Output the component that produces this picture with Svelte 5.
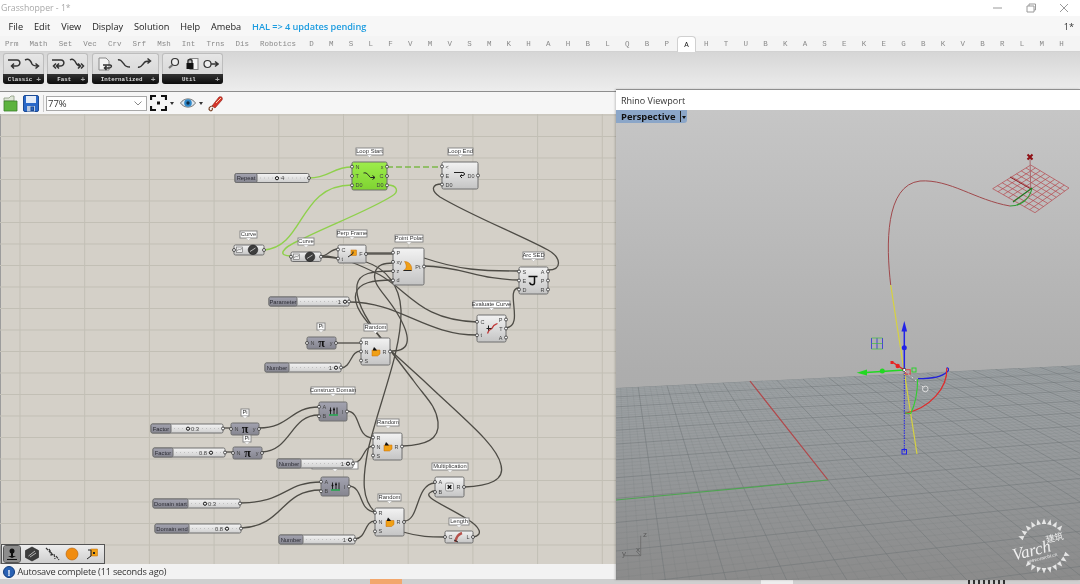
<script>
  const menus = ['File','Edit','View','Display','Solution','Help','Ameba'];
  const wide = ['Prm','Math','Set','Vec','Crv','Srf','Msh','Int','Trns','Dis','Robotics'];
  const narrow = 'D M S L F V M V S M K H A H B L Q B P A H T U B K A S E K E G B K V B R L M H'.split(' ');
  const activeTab = 19;

  const ribbon = [
    { name:'Classic', w:41, icons:['loop','wiggle'] },
    { name:'Fast', w:41, icons:['loop2','wiggle2'] },
    { name:'Internalized', w:67, icons:['doc','wiggle3','wiggle4'] },
    { name:'Util', w:61, icons:['lens','lock','timer'] }
  ];
  const ribbonPaths = {
    loop:'M1 3 H10 C14 3 14 9 9 9 H5 M7 6.5 L4.5 9 L7 11.5',
    wiggle:'M1 3 C5 1 7 4 8 7 C9 9 11 9 14 9 M11.5 6.5 L14.5 9 L11.5 11.5',
    loop2:'M1 3 H10 C14 3 14 9 9 9 H6 M8 6.5 L5.5 9 L8 11.5 M5 6.5 L2.5 9 L5 11.5',
    wiggle2:'M1 3 C4 1 6 4 7 6 C8 8 9 9 11 9 M9 6.5 L11.5 9 L9 11.5 M12 6.5 L14.5 9 L12 11.5',
    wiggle3:'M1 3 C4 2 5 5 7 7 C8 9 10 10 13 10',
    wiggle4:'M1 10 C4 11 5 8 7 6 C8 4 10 4 13 4 M10.5 1.5 L13.5 4 L10.5 6.5',
    timer:'M8 7 H14.5 M12 4.5 L15 7 L12 9.5'
  };

  /* canvas */
  const vLines = Array.from({length:10},(_,i)=>20+i*64.7);
  const hLines = Array.from({length:21},(_,i)=>115+i*21.5);

  const nodes = [
    {x:352,y:162,w:35,h:28,k:'green',tag:'Loop Start',tx:356,tw:27,ty:148,i:['N','T','D0'],o:['x','C','D0'],ic:'loop'},
    {x:442,y:162,w:36,h:27,k:'light',tag:'Loop End',tx:448,tw:25,ty:148,i:['<','E','D0'],o:['D0'],ic:'loopend'},
    {x:338,y:245,w:28,h:18,k:'light',tag:'Perp Frame',tx:337,tw:30,ty:230,i:['C','t'],o:['F'],ic:'perp'},
    {x:393,y:248,w:31,h:37,k:'light',tag:'Point Polar',tx:395,tw:28,ty:235,i:['P','xy','z','d'],o:['Pt'],ic:'polar'},
    {x:519,y:267,w:29,h:27,k:'light',tag:'Arc SED',tx:523,tw:21,ty:252,i:['S','E','D'],o:['A','P','R'],ic:'arc'},
    {x:477,y:315,w:29,h:27,k:'light',tag:'Evaluate Curve',tx:473,tw:37,ty:301,i:['C','t'],o:['P','T','A'],ic:'eval'},
    {x:361,y:338,w:29,h:27,k:'light',tag:'Random',tx:364,tw:23,ty:324,i:['R','N','S'],o:['R'],ic:'random'},
    {x:307,y:337,w:29,h:12,k:'dark',tag:'Pi',tx:317,tw:8,ty:323,i:['N'],o:['y'],ic:'pi'},
    {x:319,y:402,w:28,h:19,k:'dark',tag:'Construct Domain',tx:311,tw:44,ty:387,i:['A','B'],o:['I'],ic:'domain'},
    {x:231,y:423,w:28,h:12,k:'dark',tag:'Pi',tx:241,tw:8,ty:409,i:['N'],o:['y'],ic:'pi'},
    {x:373,y:433,w:29,h:27,k:'light',tag:'Random',tx:377,tw:22,ty:419,i:['R','N','S'],o:['R'],ic:'random'},
    {x:321,y:477,w:28,h:19,k:'dark',tag:'',tx:312,tw:46,ty:462,i:['A','B'],o:['I'],ic:'domain'},
    {x:233,y:447,w:29,h:12,k:'dark',tag:'Pi',tx:243,tw:8,ty:435,i:['N'],o:['y'],ic:'pi'},
    {x:375,y:508,w:29,h:28,k:'light',tag:'Random',tx:378,tw:23,ty:494,i:['R','N','S'],o:['R'],ic:'random'},
    {x:435,y:477,w:29,h:20,k:'light',tag:'Multiplication',tx:432,tw:36,ty:463,i:['A','B'],o:['R'],ic:'mult'},
    {x:445,y:531,w:28,h:12,k:'light',tag:'Length',tx:449,tw:20,ty:518,i:['C'],o:['L'],ic:'length'}
  ];
  const ports = (n, list) => list.map((l,j)=>({l, y:n.y+n.h*(j+.5)/list.length}));

  const sliders = [
    {x:235,y:173.5,w:74,lw:22,n:'Repeat',v:'4',kx:277,vx:281,a:'start'},
    {x:269,y:297,w:80,lw:28,n:'Parameter',v:'1',kx:345,vx:341,a:'end'},
    {x:265,y:363,w:76,lw:24,n:'Number',v:'1',kx:336,vx:332,a:'end'},
    {x:151,y:424,w:72,lw:20,n:'Factor',v:'0.3',kx:188,vx:191,a:'start'},
    {x:153,y:448,w:72,lw:20,n:'Factor',v:'0.8',kx:211,vx:207,a:'end'},
    {x:277,y:459,w:76,lw:24,n:'Number',v:'1',kx:348,vx:344,a:'end'},
    {x:153,y:499,w:87,lw:35,n:'Domain start',v:'0.3',kx:205,vx:208,a:'start'},
    {x:155,y:524,w:86,lw:34,n:'Domain end',v:'0.8',kx:227,vx:223,a:'end'},
    {x:279,y:535,w:76,lw:24,n:'Number',v:'1',kx:350,vx:346,a:'end'}
  ];
  const curves = [
    {x:234,y:245,w:30,h:10,tag:'Curve',tx:240,tw:17,ty:231},
    {x:291,y:252,w:30,h:9.5,tag:'Curve',tx:298,tw:16,ty:238}
  ];

  const greenWires = [
    'M309 178 C330 178 332 167 352 167',
    'M264 250 C305 247 298 185 352 185',
    'M387 185 C398 185 399 192 392 196 C370 210 330 225 300 240 C280 249 278 256 291 256'
  ];
  const wires = [
    'M321 256 C328 256 330 249 338 249','M321 257 C328 257 330 258 338 258',
    'M366 253 H393','M366 254 H393',
    'M321 256 C340 256 360 265 380 275 C410 292 420 320 477 322',
    'M349 302 C400 302 425 335 477 335',
    'M424 258 C460 270 480 271 519 271','M424 266 C460 266 480 280 519 280',
    'M506 328 C525 326 504 288 519 288',
    'M548 270 C562 270 562 258 548 250 C520 235 470 215 440 197 C430 190 432 184 442 184',
    'M392 351 C412 351 411 336 397 313 C385 293 372 285 375 273 C377 264 385 263 393 263',
    'M403 446 C425 445 440 440 438 422 C436 405 425 397 413 380 L380 337 C365 318 355 300 357 285 C359 273 372 271 393 271',
    'M464 487 C490 486 505 480 501 465 C497 445 465 420 423 380 L390 350 L380 337 C365 320 352 305 356 293 C359 283 372 280 393 280',
    'M366 262 C385 268 400 285 401 310 C402 350 380 400 368 450 C362 480 362 500 375 512',
    'M336 343 H361','M341 368 C352 367 350 351 361 351',
    'M223 428 H231','M259 428 C290 428 290 407 319 407',
    'M225 452 H233','M262 452 C292 450 290 415 319 415',
    'M347 411 C362 412 355 437 373 438','M353 463 C365 462 362 447 373 446',
    'M240 503 C285 503 285 482 321 482','M241 528 C285 526 280 490 321 490',
    'M349 486 C364 487 358 511 375 512','M355 539 C367 538 364 521 375 521',
    'M404 521 C420 521 415 484 435 483','M403 532 C420 537 430 537 445 537',
    'M473 537 C484 535 480 527 467 519 C445 505 421 497 431 492 C432 491 434 491 435 491'
  ];

  const dockIcons = [0,1,2,3,4];

  /* viewport perspective ground */
  const O=[828,480], VU=[613,208], VV=[3563,243], a=.0711, b=.015;
  function proj(u,v){
    const t=u*a, s=v*b, d=1+t+s;
    return [(O[0]+t*VU[0]+s*VV[0])/d,(O[1]+t*VU[1]+s*VV[1])/d];
  }
  function lineStr(p,q){ return `M${p[0].toFixed(1)} ${p[1].toFixed(1)}L${q[0].toFixed(1)} ${q[1].toFixed(1)}`; }
  let minorD='', majorD='';
  const UMIN=-6, UMAX=8, VMIN=-30, VMAX=30;
  for(let i=UMIN*5;i<=UMAX*5;i++){
    const s=lineStr(proj(i/5,VMIN),proj(i/5,VMAX));
    if(i%5===0) majorD+=s; else minorD+=s;
  }
  for(let i=VMIN*5;i<=VMAX*5;i++){
    const s=lineStr(proj(UMIN,i/5),proj(UMAX,i/5));
    if(i%5===0) majorD+=s; else minorD+=s;
  }
  const farEdge = (()=>{ const p=proj(8,-30), q=proj(8,30); return `${p[0]},${p[1]} ${q[0]},${q[1]} 1400,900 -400,900`; })();

  /* red cplane diamond */
  const T=[1030.7,165],R=[1069,188],B=[1035,212.7],L=[992.7,188.7];
  const mix=(p,q,f)=>[p[0]+(q[0]-p[0])*f,p[1]+(q[1]-p[1])*f];
  let planeD='';
  for(let i=0;i<=8;i++){ const f=i/8;
    planeD+=lineStr(mix(T,R,f),mix(L,B,f));
    planeD+=lineStr(mix(T,L,f),mix(R,B,f));
  }
  /* watermark: rays around a ring, open on the left and right where the text runs */
  const rays=(()=>{ const c=[1044,546],n=26; let d='';
    for(let i=0;i<n;i++){
      const an=(i+.5)*2*Math.PI/n, sn=Math.abs(Math.sin(an-(-14*Math.PI/180)));
      if(sn<.45) continue;
      const w=Math.PI/n*.85, pt=(r,x)=>`${(c[0]+r*Math.cos(x)).toFixed(1)} ${(c[1]+r*Math.sin(x)).toFixed(1)}`;
      d+=`M${pt(22,an-w)}L${pt(27.5,an)}L${pt(22,an+w)}Z`;
    }
    return d; })();
</script>

<div class="app">
  <header class="title">Grasshopper - 1*
    <div class="win">
      <svg width="12" height="10" viewBox="0 0 12 10"><path d="M1 5H10" class="wc"/></svg>
      <svg width="12" height="10" viewBox="0 0 12 10"><path d="M2 3H9V9H2ZM4 3V1H10.500V7H9" class="wc"/></svg>
      <svg width="12" height="10" viewBox="0 0 12 10"><path d="M2 1L10 9M10 1L2 9" class="wc"/></svg>
    </div>
  </header>

  <nav class="menu">
    {#each menus as m}<span>{m}</span>{/each}
    <span class="hal">HAL =&gt; 4 updates pending</span>
    <span class="star">1*</span>
  </nav>

  <div class="tabs">
    {#each wide as t}<span class="wt">{t}</span>{/each}
    {#each narrow as t, i}<span class="nt" class:on={i===activeTab}>{t}</span>{/each}
  </div>

  <div class="ribbon">
    {#each ribbon as g}
      <div class="group" style="width:{g.w}px">
        <div class="gicons">
          {#each g.icons as ic}
            <svg width="16" height="14" viewBox="0 0 16 14">
              {#if ic==='doc'}
                <path d="M2 1H9L12 4V13H2Z" class="docf"/>
                <path d="M6 8H13C15 8 15 11 12 11H8M9.500 9L7.500 11L9.500 13" class="ri"/>
              {:else if ic==='lens'}
                <circle cx="9" cy="5" r="3.500" class="lens"/><path d="M6.500 8L3 11" class="rt"/>
              {:else if ic==='lock'}
                <rect x="6" y="1.500" width="8" height="11" class="docf"/>
                <rect x="2.500" y="6" width="7" height="6" class="blk"/><path d="M4 6V4C4 2 8 2 8 4V6" class="ri"/>
              {:else if ic==='timer'}
                <circle cx="4.500" cy="7" r="3.500" class="lens"/><path d={ribbonPaths.timer} class="ri"/>
              {:else}
                <path d={ribbonPaths[ic]} class="ri"/>
              {/if}
            </svg>
          {/each}
        </div>
        <div class="cap"><span>{g.name}</span><b>+</b></div>
      </div>
    {/each}
  </div>

  <div class="toolbar">
    <svg class="ti" width="15" height="17" viewBox="0 0 15 17">
      <path d="M1 3H6L8 1H11V6H1Z" class="fback"/>
      <path d="M1 6H14V16H1Z" class="ffront"/>
    </svg>
    <svg class="ti save" width="16" height="17" viewBox="0 0 16 17">
      <rect x=".5" y=".5" width="15" height="16" rx="1.500" class="sbody"/>
      <rect x="3" y="1" width="10" height="7" class="slabel"/>
      <rect x="4" y="11" width="8" height="5.500" class="sgate"/>
      <rect x="8" y="12" width="2.500" height="3.500" class="sbody"/>
    </svg>
    <i class="sep"></i>
    <div class="combo"><span>77%</span>
      <svg width="8" height="5" viewBox="0 0 8 5"><path d="M.5 .5L4 4L7.500 .5" class="chev"/></svg>
    </div>
    <svg class="fit" width="17" height="16" viewBox="0 0 17 16">
      <path d="M1 5V1H6M11 1H16V5M16 11V15H11M6 15H1V11" class="fitp"/><rect x="7" y="6.500" width="3" height="3" class="blk"/>
    </svg>
    <i class="tri"></i>
    <svg class="eye" width="16" height="12" viewBox="0 0 16 12">
      <path d="M.5 6C4 .5 12 .5 15.500 6C12 11.500 4 11.500 .5 6Z" class="eyew"/>
      <circle cx="8" cy="6" r="3.800" class="eyeb"/><circle cx="8" cy="6" r="1.700" class="eyed"/>
    </svg>
    <i class="tri"></i>
    <svg class="pen" width="17" height="17" viewBox="0 0 17 17">
      <path d="M5 11L12 2C15 1 16 3 15 5L8 13Z" class="penr"/>
      <path d="M9 8L14 3" class="pent"/>
      <path d="M6 11C2 11 1 14 3 15.500C5 16.500 6 14 5 13" class="penw"/>
    </svg>
  </div>

  <main class="canvas">
    <svg class="cv" width="616" height="450" viewBox="0 114 616 450">
      <defs>
        <linearGradient id="gl" x1="0" y1="0" x2="0" y2="1"><stop offset="0" stop-color="#f3f3f3"/><stop offset="1" stop-color="#c4c4c4"/></linearGradient>
        <linearGradient id="gd" x1="0" y1="0" x2="0" y2="1"><stop offset="0" stop-color="#a3a3b0"/><stop offset="1" stop-color="#85858f"/></linearGradient>
        <linearGradient id="gg" x1="0" y1="0" x2="0" y2="1"><stop offset="0" stop-color="#9ded4c"/><stop offset="1" stop-color="#7fd331"/></linearGradient>
        <linearGradient id="gs" x1="0" y1="0" x2="0" y2="1"><stop offset="0" stop-color="#f4f4f4"/><stop offset="1" stop-color="#cfcfcf"/></linearGradient>
      </defs>
      {#each vLines as x}<line x1={x} x2={x} y1="114" y2="564" class="grid"/>{/each}
      {#each hLines as y}<line x1="0" x2="616" y1={y} y2={y} class="grid"/>{/each}

      {#each wires as d}<path {d} class="wire"/>{/each}
      {#each greenWires as d}<path {d} class="wire green"/>{/each}
      <path d="M387 167 H442" class="wire dash"/>

      {#each nodes as n}
        <rect x={n.tx} y={n.ty} width={n.tw} height="7" class="tag"/>
        <path d="M{n.tx+n.tw/2-2.500} {n.ty+7}L{n.tx+n.tw/2} {n.ty+9.500}L{n.tx+n.tw/2+2.500} {n.ty+7}Z" class="tagt"/>
        {#if n.tag}<text x={n.tx+n.tw/2} y={n.ty+5.300} class="tagx">{n.tag}</text>{/if}
        <rect x={n.x} y={n.y} width={n.w} height={n.h} rx="1.500" class="body {n.k}"/>
        {#each ports(n,n.i) as p}
          <circle cx={n.x} cy={p.y} r="1.500" class="port"/>
          <text x={n.x+3.500} y={p.y+2} class="pl">{p.l}</text>
        {/each}
        {#each ports(n,n.o) as p}
          <circle cx={n.x+n.w} cy={p.y} r="1.500" class="port"/>
          <text x={n.x+n.w-3.500} y={p.y+2} class="pl end">{p.l}</text>
        {/each}
        {@const cx=n.x+n.w/2}
        {@const cy=n.y+n.h/2}
        <g transform="translate({cx-(n.ic==='polar'?1:0)} {cy})">
          {#if n.ic==='loop'}
            <path d="M-6 -3C-2 -4 -1 0 1 1.500H5M3 -.5L5.500 1.500L3 3.500" class="ico"/>
          {:else if n.ic==='loopend'}
            <path d="M-6 -3H3C5 -3 5 0 3 0H1M2 -1L0 .5L2 2.500" class="ico"/>
          {:else if n.ic==='perp'}
            <rect x="-1" y="-4" width="5.500" height="5.500" class="org"/>
            <path d="M-4 3L1 -.5" class="ico"/><path d="M1 -2.500V-.5" class="ico"/>
          {:else if n.ic==='polar'}
            <path d="M-3 -5C3 -5 5 1 4 4H-4C0 2 -1 -2 -3 -5Z" class="org"/>
            <path d="M-4 4H4" class="ico"/>
          {:else if n.ic==='arc'}
            <path d="M-5 -4H4M1 -4V2C1 5 -3 5 -4 2" class="ico thick"/>
          {:else if n.ic==='eval'}
            <path d="M-4 5C-2 -1 0 2 1 -1C2 -4 4 -4 6 -5" class="redl"/>
            <path d="M-3 -3V2M-5 0H0" class="ico"/>
          {:else if n.ic==='random'}
            <path d="M-3.500 -1.500H4.500V2.500L2 4.500H-3.500Z" class="org"/><path d="M-2.500 -2L-1.500 -4.500L.5 -2.500L1.500 -1H-2.500Z" class="blk"/>
          {:else if n.ic==='pi'}
            <text x="0" y="4" class="pi">π</text>
          {:else if n.ic==='domain'}
            <path d="M-2.500 -4V3M1 -4V3M4 -4V3" class="ico"/>
            <circle cx="-2.500" cy="-1" r="1" class="blk"/><circle cx="1" cy="-2" r="1" class="blk"/>
            <path d="M-4 3.500H5" class="grn"/>
          {:else if n.ic==='mult'}
            <rect x="-4" y="-4" width="8" height="8" rx="1.500" class="mbox"/>
            <path d="M-1.800 -1.800L1.800 1.800M1.800 -1.800L-1.800 1.800" class="ico thick"/>
          {:else if n.ic==='length'}
            <path d="M-3.500 5C-3 0 0 -3 3 -4" class="lenr"/><path d="M-5 3L-1 5" class="ico"/>
          {/if}
        </g>
      {/each}

      {#each curves as c}
        <rect x={c.tx} y={c.ty} width={c.tw} height="7" class="tag"/>
        <path d="M{c.tx+c.tw/2-2.500} {c.ty+7}L{c.tx+c.tw/2} {c.ty+9.500}L{c.tx+c.tw/2+2.500} {c.ty+7}Z" class="tagt"/>
        <text x={c.tx+c.tw/2} y={c.ty+5.300} class="tagx">{c.tag}</text>
        <rect x={c.x} y={c.y} width={c.w} height={c.h} rx="1.500" class="body light"/>
        <rect x={c.x+2.500} y={c.y+2} width="6" height="5.500" class="cb"/>
        <path d="M{c.x+3.500} {c.y+6}C{c.x+5} {c.y+1} {c.x+6} {c.y+8} {c.x+7.500} {c.y+3}" class="ico thin"/>
        <circle cx={c.x+19} cy={c.y+4.800} r="4.800" class="hex"/>
        <path d="M{c.x+16} {c.y+6.500}L{c.x+21.500} {c.y+3}" class="hexl"/>
        <circle cx={c.x} cy={c.y+c.h/2} r="1.500" class="port"/>
        <circle cx={c.x+c.w} cy={c.y+c.h/2} r="1.500" class="port"/>
      {/each}

      {#each sliders as s}
        <rect x={s.x} y={s.y} width={s.w} height="9" rx="1.500" class="body slide"/>
        <rect x={s.x} y={s.y} width={s.lw} height="9" rx="1.500" class="body dark"/>
        <text x={s.x+s.lw/2} y={s.y+6.500} class="sn">{s.n}</text>
        <line x1={s.x+s.lw+3} x2={s.x+s.w-3} y1={s.y+4.500} y2={s.y+4.500} class="track"/>
        <circle cx={s.kx} cy={s.y+4.700} r="1.600" class="knob"/>
        <text x={s.vx} y={s.y+6.500} class="sv {s.a}">{s.v}</text>
        <circle cx={s.x+s.w} cy={s.y+4.500} r="1.500" class="port"/>
      {/each}
    </svg>

    <div class="dock">
      {#each dockIcons as d}
        <svg class="di" class:pressed={d===0} width="16" height="16" viewBox="0 0 16 16">
          {#if d===0}
            <circle cx="8" cy="5" r="2.500" class="blk"/><path d="M7 6H9V10H12L8 12L4 10H7ZM3 13H13V14H3Z" class="blk"/>
          {:else if d===1}
            <path d="M8 1L14.500 4.500V11.500L8 15L1.500 11.500V4.500Z" class="hex"/><path d="M4.500 10L11 5M6 11L12 7" class="hexl"/>
          {:else if d===2}
            <path d="M2 2L6 6L7 9L10 8L11 13M5 3L8 8M12 10L15 14" class="dockw"/>
          {:else if d===3}
            <circle cx="8" cy="8" r="6" class="orb"/>
          {:else}
            <rect x="7" y="3" width="6.500" height="7" class="org"/><path d="M3 13L7 10V4H4M9 6L11 8M11 6L9 8" class="ico"/>
          {/if}
        </svg>
      {/each}
    </div>
  </main>

  <footer class="status">
    <svg width="12" height="12" viewBox="0 0 12 12"><circle cx="6" cy="6" r="5.500" class="infoc"/><text x="6" y="9.500" class="infot">!</text></svg>
    <span>Autosave complete (11 seconds ago)</span>
  </footer>
  <div class="strip"><i class="orange"></i><i class="pale"></i><i class="frag"></i></div>

  <section class="viewport">
    <div class="vh">Rhino Viewport</div>
    <div class="vb">
      <svg class="vs" width="464" height="470" viewBox="616 110 464 470">
        <defs>
          <linearGradient id="gr" x1="0" y1="360" x2="0" y2="580" gradientUnits="userSpaceOnUse">
            <stop offset="0" stop-color="#a0a5a8"/><stop offset=".5" stop-color="#95989a"/><stop offset="1" stop-color="#8b8b8b"/>
          </linearGradient>
        </defs>
        <polygon points={farEdge} fill="url(#gr)"/>
        <clipPath id="gc"><polygon points={farEdge}/></clipPath>
        <g clip-path="url(#gc)">
          <path d={minorD} class="gmin"/>
          <path d={majorD} class="gmaj"/>
        </g>
        <path d="M750 381L828 480" class="axr"/>
        <path d="M616 500L828 480" class="axg"/>

        <g class="axes">
          <path d="M640.700 535.700V555.700H625M640.700 555.700L637 552"/>
          <text x="643" y="537">z</text><text x="622" y="556">y</text><text x="636" y="552">x</text>
        </g>

        <path d={planeD} class="plane"/>
        <path d="M1030 157L1030.700 188" class="mar"/>
        <path d="M1010 177L1031 189" class="mard"/>
        <path d="M1027.500 154.500L1032.500 159.500M1032.500 154.500L1027.500 159.500" class="xmk"/>
        <path d="M890.700 285C886 245 885 185 920 181C950 179 975 200 1010 206" class="crv"/>
        <path d="M1010 206C1022 206 1030 198 1032 188" class="gc1"/>
        <path d="M1013 202L1032 188" class="gc2"/>
        <path d="M890.700 285L917 454" class="yel"/>

        <path d="M904.300 370V452" class="bdot"/>
        <rect x="902" y="449.500" width="4.500" height="4.500" class="bsq"/>
        <path d="M904.300 370V331" class="bl"/>
        <path d="M904.300 321L901.500 331.500H907.100Z" class="bf"/>
        <circle cx="904.300" cy="347.700" r="2.500" class="bf"/>
        <path d="M904.300 370L866 372.500" class="gl"/>
        <path d="M856.700 372.700L867 369.500V375.500Z" class="gf"/>
        <circle cx="882.300" cy="371" r="2.500" class="gf"/>
        <path d="M904.300 370L893 362.500" class="rl"/>
        <circle cx="897.700" cy="366" r="2.200" class="rf"/><rect x="890.500" y="361" width="3" height="3" class="rf"/>
        <rect x="905.700" y="369.700" width="4.500" height="4.500" class="rs"/>
        <rect x="912" y="368" width="4" height="4" class="gs"/>
        <rect x="903" y="368.700" width="2.600" height="2.600" class="ws"/>
        <path d="M905 371L923 387" class="wdot"/>
        <circle cx="925.300" cy="389" r="2.800" class="wc2"/>
        <path d="M918 378.700C930 378.700 942 377 947 372C950 370 948 367 946.700 368" class="ar1"/>
        <path d="M946.700 368C948 388 930 408 905 413.500" class="ar2"/>
        <path d="M917.700 379C917.500 392 915 405 910.700 413.500M905 413L911 413.500" class="ar3"/>
        <path d="M871.500 338V349M877 338V349M882.500 338V349" class="ib"/>
        <path d="M871.500 338H882.500M871.500 343.500H882.500M871.500 349H882.500" class="ig"/>

        <g>
          <path d={rays} class="burst"/>
          <g transform="rotate(-14 1043 545)">
            <text x="1011" y="553" class="wmt">Varch</text>
            <text x="1047" y="544" class="wmc">建筑</text>
            <text x="1024" y="559" class="wms">www.varchi.cn</text>
          </g>
        </g>
      </svg>
      <div class="ptab"><b>Perspective</b><i class="pbar"></i><i class="pd"></i></div>
    </div>
  </section>
</div>

<style>
  :global(body){margin:0;background:#fff}
  .app{position:relative;width:1080px;height:584px;overflow:hidden;display:flex;flex-direction:column;background:#fff;font-family:"Open Sans","Noto Sans",sans-serif;filter:blur(.45px)}
  .title{height:16px;flex:none;display:flex;align-items:center;justify-content:space-between;font-size:8.700px;color:#a8a8a8;padding:0 10px 0 1px}
  .win{display:flex;gap:21px}
  .wc{fill:none;stroke:#9a9a9a;stroke-width:1}
  .menu{height:20px;flex:none;display:flex;align-items:center;gap:10.900px;padding:0 6px 0 8.500px;background:#f7f7f7;font-size:9.200px;color:#222}
  .hal{color:#1c9ce0;font-weight:600;letter-spacing:-.05px}
  .star{margin-left:auto;color:#333}
  .tabs{height:16px;flex:none;display:flex;align-items:center;padding-left:0;background:#f4f4f4;font:7.500px "Liberation Mono",monospace;color:#8a8a8a;border-bottom:1px solid #d2d2d2;box-sizing:border-box}
  .wt{padding:0 5.550px}
  .wt:first-child{padding-left:5px}
  .nt{width:19.740px;text-align:center;flex:none;height:100%;display:flex;align-items:center;justify-content:center;box-sizing:border-box}
  .nt.on{background:#fff;border:1px solid #d0d0d0;border-bottom:0;border-radius:4px 4px 0 0;color:#222;height:17px;margin-top:1px}
  .ribbon{height:40px;flex:none;display:flex;gap:3.300px;padding:1px 0 0 3px;box-sizing:border-box;background:linear-gradient(#d6d6d6,#ededed);border-bottom:1px solid #8e8e8e}
  .group{height:31px;border-radius:3px;background:linear-gradient(#e6e6e6,#d2d2d2);border:1px solid #bdbdbd;border-bottom:0;box-sizing:border-box;display:flex;flex-direction:column}
  .gicons{height:20px;flex:none;display:flex;justify-content:space-around;align-items:center;padding:0 2px}
  .cap{flex:1;background:linear-gradient(#333,#0c0c0c);border-radius:0 0 3px 3px;color:#ddd;font:bold 5.800px "Liberation Mono",monospace;display:flex;align-items:center;justify-content:center;position:relative;margin:0 -1px;padding-right:7px}
  .cap b{position:absolute;right:3px;font-size:8px;color:#aaa}
  .ri{fill:none;stroke:#333;stroke-width:1.500}
  .rt{fill:none;stroke:#777;stroke-width:2.200}
  .docf{fill:#f4f4f4;stroke:#888}
  .lens{fill:#eee;stroke:#333;stroke-width:1.200}
  .blk{fill:#111}
  .toolbar{height:22px;flex:none;display:flex;align-items:center;background:#f6f6f6;padding-left:3px;box-sizing:border-box}
  .save{margin-left:5px}
  .sep{width:1px;height:17px;background:#c9c9c9;margin:0 2px 0 4px}
  .fback{fill:#dfe7d8;stroke:#8a9a80;stroke-width:.8}
  .ffront{fill:#5cb33e;stroke:#3d7f2b;stroke-width:.8}
  .sbody{fill:#2a68c8;stroke:#1b4a94}
  .slabel{fill:#e4ecf8}
  .sgate{fill:#b9c8de}
  .combo{width:101px;height:15px;background:#fff;border:1px solid #a8a8a8;box-sizing:border-box;display:flex;align-items:center;justify-content:space-between;padding:0 4px 0 1px;font-size:9.500px;color:#333}
  .chev{fill:none;stroke:#888}
  .fit{margin-left:3px}
  .fitp{fill:none;stroke:#111;stroke-width:2.200}
  .tri{width:0;height:0;border:2px solid transparent;border-top:3px solid #333;margin:3px 3px 0 3px;flex:none}
  .eye{margin-left:3px}
  .eyew{fill:#dde6ee;stroke:#555;stroke-width:.8}
  .eyeb{fill:#2d87c9}
  .eyed{fill:#102b44}
  .pen{margin-left:1px}
  .penr{fill:#d7352a;stroke:#8a201a;stroke-width:.6}
  .pent{stroke:#f6d8b0;fill:none}
  .penw{fill:none;stroke:#7a4022;stroke-width:1.200}
  .canvas{flex:1;position:relative;background:#d4d0c8;border-left:1px solid #9c9c9c;box-sizing:border-box;min-height:0}
  .cv{position:absolute;left:-1px;top:0;display:block}
  .grid{stroke:#c2bfb5;stroke-width:1}
  .wire{fill:none;stroke:#4e4c46;stroke-width:1.300}
  .wire.green{stroke:#8fd04c;stroke-width:1.400}
  .wire.dash{stroke:#7cb84a;stroke-width:1.500;stroke-dasharray:6 3}
  .tag{fill:#fff;stroke:#808080;stroke-width:.9}
  .tagt{fill:#fff;stroke:#aaa;stroke-width:.4}
  .tagx{font:5.800px "Liberation Sans",sans-serif;fill:#333;text-anchor:middle}
  .body{stroke:#6f6f6f;stroke-width:1}
  .body.light{fill:url(#gl)}
  .body.dark{fill:url(#gd)}
  .body.green{fill:url(#gg)}
  .body.slide{fill:url(#gs)}
  .port{fill:#f4f4f4;stroke:#333;stroke-width:.8}
  .pl{font:5.500px "Liberation Sans",sans-serif;fill:#444}
  .pl.end{text-anchor:end}
  .ico{fill:none;stroke:#222;stroke-width:1}
  .ico.thin{stroke-width:.6;stroke:#555}
  .ico.thick{stroke-width:1.500;stroke:#111}
  .org{fill:#f0a016;stroke:#c46a08;stroke-width:.5}
  .redl{fill:none;stroke:#c23a3a;stroke-width:1.300}
  .grn{stroke:#27a650;stroke-width:1.600;fill:none}
  .mbox{fill:#eee;stroke:#777;stroke-width:.7}
  .lenr{fill:none;stroke:#b5524c;stroke-width:2.400}
  .pi{font:bold 12px "Liberation Serif",serif;fill:#111;text-anchor:middle}
  .cb{fill:#eee;stroke:#666;stroke-width:.6}
  .hex{fill:#3d3d3d;stroke:#1c1c1c;stroke-width:.6}
  .hexl{stroke:#b5b5b5;stroke-width:1;fill:none}
  .sn{font:5.800px "Liberation Sans",sans-serif;fill:#2c2c34;text-anchor:middle}
  .sv{font:5.800px "Liberation Sans",sans-serif;fill:#444}
  .sv.end{text-anchor:end}
  .track{stroke:#b2b2b2;stroke-width:.7;stroke-dasharray:1 3}
  .knob{fill:#eee;stroke:#111;stroke-width:1}
  .dock{position:absolute;left:0;bottom:0;width:104px;height:20px;box-sizing:border-box;display:flex;align-items:center;gap:4px;padding:0 1px 0 2px;background:linear-gradient(#ededed,#cfcfcf);border:1px solid #555}
  .di{flex:none}
  .di.pressed{background:#8c8c8c;border-radius:2px;outline:1px solid #555}
  .dockw{fill:none;stroke:#333;stroke-width:1.200;stroke-dasharray:3 1}
  .orb{fill:#f08c10;stroke:#b4600a;stroke-width:.6}
  .status{height:15px;flex:none;display:flex;align-items:center;gap:2.500px;padding-left:3px;background:#f2f2f2;font-size:9.200px;letter-spacing:-.2px;color:#333;box-sizing:border-box}
  .infoc{fill:#2a62b4;stroke:#123c7a}
  .infot{font:bold 9px "Liberation Sans",sans-serif;fill:#fff;text-anchor:middle}
  .strip{height:5px;flex:none;background:#cfcfcf;position:relative}
  .strip i{position:absolute;top:0;height:5px}
  .orange{left:370px;width:32px;background:#f2a76d}
  .pale{left:761px;width:32px;background:#eee}
  .strip .frag{left:968px;width:40px;top:1px;height:4px;background:repeating-linear-gradient(90deg,#333 0 2px,transparent 2px 5px)}
  .viewport{position:absolute;left:616px;top:89px;width:464px;height:491px;display:flex;flex-direction:column;box-shadow:-1px 0 2px rgba(0,0,0,.2);border-top:1px solid #8f8f8f;box-sizing:border-box}
  .vh{height:20px;flex:none;background:#fff;font-size:9px;color:#333;display:flex;align-items:center;padding-left:5px}
  .vb{flex:1;position:relative;background:linear-gradient(#c6c6c6 0,#adadad 56%,#a5a5a5 100%);min-height:0;overflow:hidden}
  .vs{position:absolute;left:0;top:0;display:block}
  .ptab{position:relative;display:flex;align-items:center;height:13px;width:71px;box-sizing:border-box;padding-left:5px;background:#8ba6c8;border-radius:0 0 3px 0;font-size:9.400px;color:#111}
  .ptab b{font-weight:700;width:58.500px;flex:none}
  .pbar{width:1px;height:11px;background:#222;flex:none}
  .pd{width:0;height:0;border:2.500px solid transparent;border-top:3px solid #111;margin:3px 0 0 1px;flex:none}
  .gmin{fill:none;stroke:#6c7477;stroke-width:.4;opacity:.35}
  .gmaj{fill:none;stroke:#6b7174;stroke-width:.8;opacity:.6}
  .axr{stroke:#b5474a;stroke-width:1.200;fill:none}
  .axg{stroke:#4fa452;stroke-width:1.200;fill:none}
  .axes path{fill:none;stroke:#6a6a6a;stroke-width:.8}
  .axes text{font:8px "Liberation Sans",sans-serif;fill:#5c5c5c}
  .plane{fill:none;stroke:#b4484e;stroke-width:.7}
  .mar{stroke:#a86a6e;stroke-width:1;fill:none}
  .mard{stroke:#8e1f24;stroke-width:1;fill:none}
  .xmk{stroke:#8e0f14;stroke-width:2;fill:none}
  .crv{fill:none;stroke:#a0494c;stroke-width:1}
  .gc1{fill:none;stroke:#2a9a30;stroke-width:1.100}
  .gc2{fill:none;stroke:#1d7a22;stroke-width:1.200}
  .yel{fill:none;stroke:#d7d23f;stroke-width:1.200}
  .bdot{stroke:#2222e8;stroke-width:1;stroke-dasharray:1.500 1;fill:none}
  .bsq{fill:none;stroke:#2222e8;stroke-width:1}
  .bl{stroke:#2222e8;stroke-width:1.500}
  .bf{fill:#2222e8}
  .gl{stroke:#22d822;stroke-width:1.500}
  .gf{fill:#22d822}
  .rl{stroke:#e82222;stroke-width:1.500}
  .rf{fill:#e82222}
  .rs{fill:none;stroke:#e04040;stroke-width:1}
  .gs{fill:none;stroke:#2fd02f;stroke-width:1}
  .ws{fill:#fff;stroke:#222;stroke-width:.5}
  .wdot{stroke:#e8e8e8;stroke-width:1;stroke-dasharray:1.500 3;fill:none}
  .wc2{fill:none;stroke:#ddd;stroke-width:1}
  .ar1{fill:none;stroke:#2222d8;stroke-width:1.200}
  .ar2{fill:none;stroke:#e02a2a;stroke-width:1.200}
  .ar3{fill:none;stroke:#2fd02f;stroke-width:1.100}
  .ib{stroke:#3a3ad8;stroke-width:.9;fill:none}
  .ig{stroke:#3fbf3f;stroke-width:.7;fill:none}
  .burst{fill:#e6e6e6;stroke:none}
  .wmt{font:italic 17px "Liberation Serif",serif;fill:#efefef}
  .wmc{font:9px "Noto Sans CJK SC",sans-serif;fill:#eee}
  .wms{font:4.800px "Liberation Sans",sans-serif;fill:#eee}
</style>
